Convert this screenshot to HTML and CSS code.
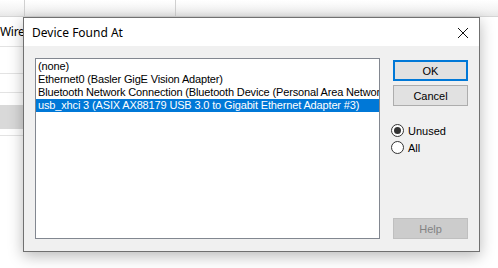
FILE: index.html
```html
<!DOCTYPE html>
<html lang="en">
<head>
    <meta charset="UTF-8">
    <title>Device Found At</title>
    <link rel="stylesheet" href="styles.css">
</head>
<body>

<div class="desk">
    <div class="grid-head">
        <span class="hcell h1"></span>
        <span class="hcell h2"></span>
        <span class="hcell h3"></span>
    </div>
    <div class="grid-rows">
        <div class="grow r1">Wires</div>
        <div class="grow r2"></div>
        <div class="grow r3"></div>
        <div class="grow r4"></div>
        <div class="grow r5"></div>
        <div class="grow r6"></div>
    </div>
</div>

<div class="dialog">
    <div class="titlebar">
        <span class="title">Device Found At</span>
        <span class="close">
            <svg width="12" height="12" viewBox="0 0 12 12">
                <path d="M1 1 L11 11 M11 1 L1 11" stroke="#111" stroke-width="1" fill="none"/>
            </svg>
        </span>
    </div>
    <div class="dlg-body">
        <div class="listbox">
            <div class="item">(none)</div>
            <div class="item">Ethernet0 (Basler GigE Vision Adapter)</div>
            <div class="item">Bluetooth Network Connection (Bluetooth Device (Personal Area Network))</div>
            <div class="item selected">usb_xhci 3 (ASIX AX88179 USB 3.0 to Gigabit Ethernet Adapter #3)</div>
        </div>
        <div class="side">
            <button class="btn default">OK</button>
            <button class="btn">Cancel</button>
            <div class="radios">
                <label class="radio"><span class="dot on"></span>Unused</label>
                <label class="radio"><span class="dot"></span>All</label>
            </div>
            <button class="btn disabled">Help</button>
        </div>
    </div>
</div>

</body>
</html>
```

FILE: styles.css
```css
body {
    margin: 0;
    width: 498px;
    height: 268px;
    overflow: hidden;
    background: #fff;
    font-family: 'Liberation Sans', Arial, sans-serif;
    font-size: 11px;
    color: #000;
    position: relative;
}
.desk {
    width: 498px;
}
.grid-head {
    display: flex;
    height: 16px;
    border-bottom: 1px solid #d5d5d5;
    background: linear-gradient(to bottom, #ffffff, #f4f4f4 60%, #e8e8e8);
}
.hcell {
    border-right: 1px solid #d0d0d0;
}
.h1 { width: 24px; }
.h2 { width: 150px; }
.h3 { flex: 1; border-right: none; }
.grid-rows {
    width: 24px;
}
.grow {
    border-bottom: 1px solid #e3e3e3;
    box-sizing: border-box;
}
.r1 {
    height: 30px;
    line-height: 30px;
    font-family: 'Noto Sans', sans-serif;
    font-size: 12px;
    white-space: nowrap;
    letter-spacing: -0.3px;
}
.r2 { height: 27px; }
.r3 { height: 19px; }
.r4 { height: 12px; border-bottom: none; }
.r5 { height: 24px; background: #d9d9d9; border-bottom: none; }
.r6 { height: 7px; }

.dialog {
    position: absolute;
    left: 23px;
    top: 17px;
    width: 455px;
    height: 233px;
    border: 1px solid #707070;
    background: #f0f0f0;
    box-shadow: 0 4px 14px rgba(0, 0, 0, 0.28);
    display: flex;
    flex-direction: column;
}
.titlebar {
    height: 29px;
    background: #fff;
    display: flex;
    align-items: center;
    justify-content: space-between;
    padding: 0 10px 0 8px;
}
.title {
    font-family: 'Noto Sans', sans-serif;
    font-size: 12px;
    color: #000;
    padding-top: 1px;
}
.close {
    display: flex;
    width: 12px;
    height: 12px;
    margin-top: 1px;
}
.dlg-body {
    flex: 1;
    display: flex;
    padding: 12px 11px 12px 11px;
    gap: 13px;
}
.listbox {
    width: 343px;
    height: 178px;
    border: 1px solid #828790;
    background: #fff;
    padding-top: 1px;
    box-sizing: content-box;
    overflow: hidden;
}
.item {
    height: 13px;
    line-height: 13px;
    padding-left: 2px;
    white-space: nowrap;
    overflow: hidden;
    letter-spacing: -0.15px;
}
.item.selected {
    background: #0078d7;
    color: #fff;
}
.side {
    width: 75px;
    display: flex;
    flex-direction: column;
    padding-top: 2px;
}
.btn {
    width: 75px;
    height: 21px;
    margin: 0 0 4px 0;
    padding: 0;
    font-family: 'Liberation Sans', Arial, sans-serif;
    font-size: 11px;
    color: #000;
    background: #e1e1e1;
    border: 1px solid #adadad;
    box-sizing: border-box;
}
.btn.default {
    border: 2px solid #0078d7;
}
.btn.disabled {
    margin: auto 0 0 0;
    background: #cccccc;
    border-color: #bfbfbf;
    color: #838383;
}
.radios {
    display: flex;
    flex-direction: column;
    gap: 4px;
    margin: 14px 0 0 -2px;
}
.radio {
    display: flex;
    align-items: center;
    height: 13px;
    gap: 4px;
}
.dot {
    width: 11px;
    height: 11px;
    border: 1px solid #333;
    border-radius: 50%;
    background: #fff;
    display: flex;
    align-items: center;
    justify-content: center;
}
.dot.on::after {
    content: "";
    width: 7px;
    height: 7px;
    border-radius: 50%;
    background: #333;
}
```
